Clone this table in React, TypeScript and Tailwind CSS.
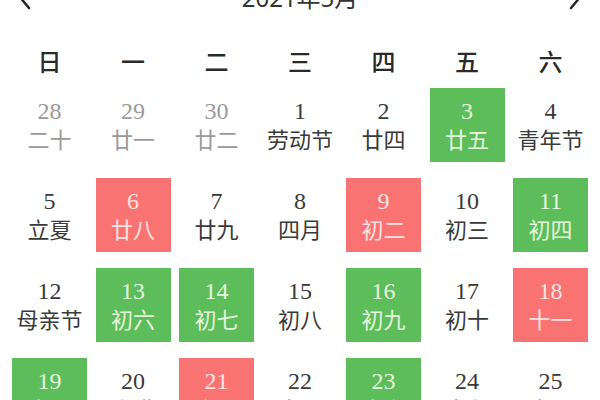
import React from 'react';

type Day = { n: number; lunar: string; kind?: 'green' | 'red' | 'muted' };

const weekdays = ['日', '一', '二', '三', '四', '五', '六'];

const days: Day[] = [
  { n: 28, lunar: '二十', kind: 'muted' },
  { n: 29, lunar: '廿一', kind: 'muted' },
  { n: 30, lunar: '廿二', kind: 'muted' },
  { n: 1, lunar: '劳动节' },
  { n: 2, lunar: '廿四' },
  { n: 3, lunar: '廿五', kind: 'green' },
  { n: 4, lunar: '青年节' },
  { n: 5, lunar: '立夏' },
  { n: 6, lunar: '廿八', kind: 'red' },
  { n: 7, lunar: '廿九' },
  { n: 8, lunar: '四月' },
  { n: 9, lunar: '初二', kind: 'red' },
  { n: 10, lunar: '初三' },
  { n: 11, lunar: '初四', kind: 'green' },
  { n: 12, lunar: '母亲节' },
  { n: 13, lunar: '初六', kind: 'green' },
  { n: 14, lunar: '初七', kind: 'green' },
  { n: 15, lunar: '初八' },
  { n: 16, lunar: '初九', kind: 'green' },
  { n: 17, lunar: '初十' },
  { n: 18, lunar: '十一', kind: 'red' },
  { n: 19, lunar: '十二', kind: 'green' },
  { n: 20, lunar: '小满' },
  { n: 21, lunar: '十四', kind: 'red' },
  { n: 22, lunar: '十五' },
  { n: 23, lunar: '十六', kind: 'green' },
  { n: 24, lunar: '十七' },
  { n: 25, lunar: '十八' },
];

function cellClass(kind?: Day['kind']) {
  if (kind === 'green') return 'bg-[#5cbd5a] text-[#e4f7dd]';
  if (kind === 'red') return 'bg-[#f97372] text-[#fde4e2]';
  if (kind === 'muted') return 'text-[#9a9a9a]';
  return 'text-[#3a3a3a]';
}

export default function App() {
  return (
    <div
      className="w-[600px] h-[400px] overflow-hidden bg-white"
      style={{ fontFamily: '"Liberation Serif", "Noto Sans CJK SC", serif' }}
    >
      {/* month header, mostly scrolled out of view */}
      <div className="h-[40px] -mt-[22px] flex items-center justify-between px-[14px]">
        <svg width="20" height="28" viewBox="0 0 20 28" fill="none" className="mt-[4px]">
          <path d="M15 -2 L5 10 L15 22" stroke="#222" strokeWidth="2.4" strokeLinecap="round" />
        </svg>
        <span
          className="text-[24px] text-[#333]"
          style={{ fontFamily: '"Noto Sans", "Noto Sans CJK SC", sans-serif' }}
        >
          2021年5月
        </span>
        <svg width="20" height="28" viewBox="0 0 20 28" fill="none" className="mt-[4px]">
          <path d="M5 -2 L15 10 L5 22" stroke="#222" strokeWidth="2.4" strokeLinecap="round" />
        </svg>
      </div>

      <div className="mt-[28px] grid grid-cols-7 gap-x-[8.5px] px-3">
        {weekdays.map((w) => (
          <div
            key={w}
            className="h-[30px] flex items-center justify-center text-[24px] leading-none font-medium text-[#2a2a2a]"
            style={{ fontFamily: '"Noto Sans CJK SC", sans-serif' }}
          >
            {w}
          </div>
        ))}
      </div>

      <div className="mt-[12px] grid grid-cols-7 gap-x-[8.5px] gap-y-[16px] px-3">
        {days.map((d) => (
          <div
            key={`${d.n}-${d.lunar}`}
            className={`h-[74px] flex flex-col items-center justify-center ${cellClass(d.kind)}`}
          >
            <span className="text-[24px] leading-[27px]">{d.n}</span>
            <span
              className="text-[22px] leading-[27px] whitespace-nowrap"
              style={{ fontFamily: '"Noto Sans CJK SC", sans-serif' }}
            >
              {d.lunar}
            </span>
          </div>
        ))}
      </div>
    </div>
  );
}
